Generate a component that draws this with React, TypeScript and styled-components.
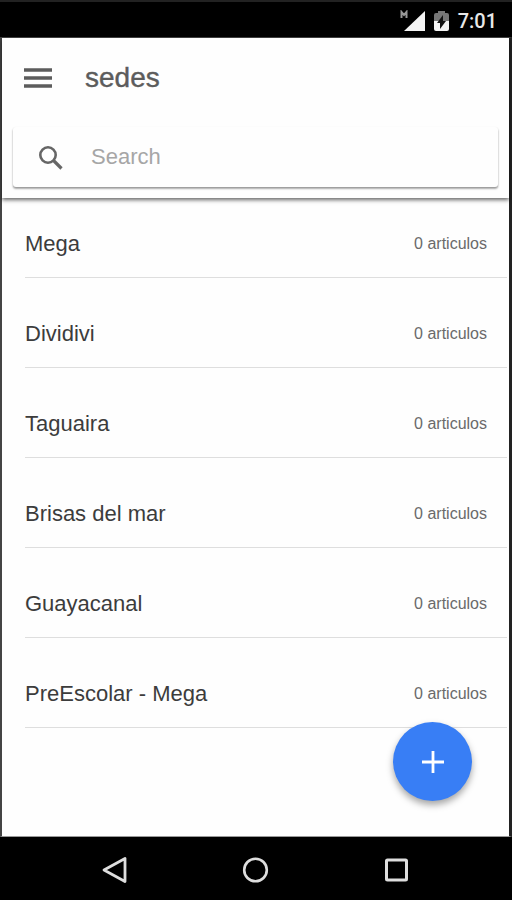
import React, { useState } from "react";
import styled, { createGlobalStyle } from "styled-components";

const GlobalStyle = createGlobalStyle`
  * { box-sizing: border-box; }
  body { margin: 0; background: #000; font-family: "Liberation Sans", Arial, sans-serif; }
  button { border: 0; padding: 0; background: none; cursor: pointer; }
`;

const Device = styled.div`
  display: flex;
  flex-direction: column;
  min-height: 100vh;
  background: #000;
`;

const StatusBar = styled.div`
  display: flex;
  align-items: center;
  justify-content: flex-end;
  gap: 9px;
  height: 37px;
  padding: 2px 15px 0 0;
  border-top: 2px solid #222;
  color: #e8e8e8;
`;

const Clock = styled.time`
  font: 500 20px/24px Roboto, sans-serif;
`;

const Screen = styled.div`
  position: relative;
  flex: 1;
  display: flex;
  flex-direction: column;
  background: #fefefe;
  border: solid #444;
  border-width: 1px 3px 1px 2px;
  border-right-color: #222;
  border-bottom-color: #999;
`;

const Header = styled.header`
  padding-bottom: 11px;
  background: #fefefe;
  box-shadow: 0 2px 4px rgba(0, 0, 0, 0.6);
`;

const Toolbar = styled.div`
  display: flex;
  align-items: center;
  gap: 32px;
  height: 79px;
  padding-left: 21px;
`;

const MenuButton = styled.button`
  display: flex;
  color: #5c5c5c;
`;

const Title = styled.h1`
  margin: 0;
  color: #5c5c5c;
  font-size: 28px;
  font-weight: 400;
  line-height: 32px;
  -webkit-text-stroke: 0.4px #5c5c5c;
`;

const SearchBox = styled.label`
  display: flex;
  align-items: center;
  gap: 26px;
  height: 60px;
  margin: 10px 11px 0;
  padding: 0 24px;
  border-radius: 3px;
  color: #666;
  background: #fefefe;
  box-shadow: 0 2px 2px rgba(0, 0, 0, 0.28), 0 1px 2px rgba(0, 0, 0, 0.2);
`;

const SearchInput = styled.input`
  flex: 1;
  min-width: 0;
  padding: 0;
  border: 0;
  outline: 0;
  background: transparent;
  color: #333;
  font: 400 22px/28px "Liberation Sans", Arial, sans-serif;
  &::placeholder { color: #a6a6a6; opacity: 1; }
`;

const List = styled.ul`
  display: grid;
  gap: 13px;
  margin: 0;
  padding: 3px 2px 0 23px;
  list-style: none;
`;

const Row = styled.li`
  display: flex;
  align-items: center;
  justify-content: space-between;
  padding: 30px 20px 20px 0;
  border-bottom: 1px solid #dedede;
`;

const Name = styled.span`
  color: #3c3c3c;
  font-size: 22px;
  line-height: 26px;
`;

const Count = styled.span`
  color: #6a6a6a;
  font-size: 16px;
  line-height: 26px;
`;

const AddButton = styled.button`
  position: absolute;
  right: 37px;
  bottom: 35px;
  display: grid;
  place-items: center;
  width: 79px;
  height: 79px;
  border-radius: 50%;
  color: #fff;
  background: #387ef5;
  box-shadow: 0 4px 7px rgba(0, 0, 0, 0.35);
`;

const NavBar = styled.nav`
  display: flex;
  align-items: center;
  justify-content: center;
  gap: 113px;
  height: 63px;
  padding-top: 3px;
  color: #dedede;
`;

const NavButton = styled.button`
  display: flex;
  color: inherit;
`;

const sites = ["Mega", "Dividivi", "Taguaira", "Brisas del mar", "Guayacanal", "PreEscolar - Mega"];

export default function App() {
  const [query, setQuery] = useState("");
  const visible = sites.filter((s) => s.toLowerCase().includes(query.toLowerCase()));
  return (
    <>
      <GlobalStyle />
      <Device>
        <StatusBar>
          <svg width="25" height="22" viewBox="0 0 25 22" aria-hidden="true">
            <path d="M25 1v20H4z" fill="#f4f4f4" />
            <path d="M1.500 8V2L4 5l2.500-3v6" fill="none" stroke="#999" strokeWidth="2" />
          </svg>
          <svg width="15" height="22" viewBox="0 0 15 22" aria-hidden="true">
            <path d="M0 5q0-2 2-2h2V1h7v2h2q2 0 2 2v7H0z" fill="#777" />
            <path d="M0 11h15v8q0 2-2 2H2q-2 0-2-2z" fill="#f4f4f4" />
            <path d="M9 5L3 13h3v6l6-8H9z" fill="#111" />
          </svg>
          <Clock>7:01</Clock>
        </StatusBar>
        <Screen>
          <Header>
            <Toolbar>
              <MenuButton aria-label="Menu">
                <svg width="30" height="20" viewBox="0 0 30 20">
                  <path d="M1 2h28M1 10h28M1 18h28" stroke="currentColor" strokeWidth="3.400" />
                </svg>
              </MenuButton>
              <Title>sedes</Title>
            </Toolbar>
            <SearchBox>
              <svg width="28" height="28" viewBox="0 0 28 28" aria-hidden="true">
                <circle cx="11" cy="12" r="7.700" fill="none" stroke="currentColor" strokeWidth="2.600" />
                <path d="M16.500 17.500l8 8" stroke="currentColor" strokeWidth="3.200" />
              </svg>
              <SearchInput
                type="text"
                aria-label="Search"
                placeholder="Search"
                value={query}
                onChange={(e) => setQuery(e.target.value)}
              />
            </SearchBox>
          </Header>
          <List>
            {visible.map((site) => (
              <Row key={site}>
                <Name>{site}</Name>
                <Count>0 articulos</Count>
              </Row>
            ))}
          </List>
          <AddButton aria-label="Add">
            <svg width="24" height="24" viewBox="0 0 24 24">
              <path d="M1 12h22M12 1v22" stroke="currentColor" strokeWidth="2.800" />
            </svg>
          </AddButton>
        </Screen>
        <NavBar>
          <NavButton aria-label="Back">
            <svg width="28" height="28" viewBox="0 0 28 28">
              <path d="M24 2.500v23L3 14z" fill="none" stroke="currentColor" strokeWidth="2.800" strokeLinejoin="round" />
            </svg>
          </NavButton>
          <NavButton aria-label="Home">
            <svg width="28" height="28" viewBox="0 0 28 28">
              <circle cx="13.500" cy="14" r="11.300" fill="none" stroke="currentColor" strokeWidth="2.600" />
            </svg>
          </NavButton>
          <NavButton aria-label="Recent apps">
            <svg width="28" height="28" viewBox="0 0 28 28">
              <rect x="3.500" y="4" width="20" height="20" rx="1" fill="none" stroke="currentColor" strokeWidth="3" />
            </svg>
          </NavButton>
        </NavBar>
      </Device>
    </>
  );
}
